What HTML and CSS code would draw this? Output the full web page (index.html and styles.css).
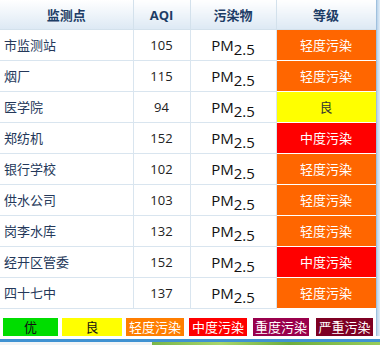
FILE: index.html
```html
<!DOCTYPE html>
<html lang="zh">
<head>
<meta charset="utf-8">
<link rel="stylesheet" href="styles.css">
</head>
<body>
<div class="page">
  <div class="main">
    <table class="aqi">
      <colgroup>
        <col class="c1"><col class="c2"><col class="c3"><col class="c4">
      </colgroup>
      <thead>
        <tr><th>监测点</th><th>AQI</th><th>污染物</th><th>等级</th></tr>
      </thead>
      <tbody>
        <tr><td class="name">市监测站</td><td class="num">105</td><td class="pol">PM<sub>2.5</sub></td><td class="lv l3">轻度污染</td></tr>
        <tr><td class="name">烟厂</td><td class="num">115</td><td class="pol">PM<sub>2.5</sub></td><td class="lv l3">轻度污染</td></tr>
        <tr><td class="name">医学院</td><td class="num">94</td><td class="pol">PM<sub>2.5</sub></td><td class="lv l2">良</td></tr>
        <tr><td class="name">郑纺机</td><td class="num">152</td><td class="pol">PM<sub>2.5</sub></td><td class="lv l4">中度污染</td></tr>
        <tr><td class="name">银行学校</td><td class="num">102</td><td class="pol">PM<sub>2.5</sub></td><td class="lv l3">轻度污染</td></tr>
        <tr><td class="name">供水公司</td><td class="num">103</td><td class="pol">PM<sub>2.5</sub></td><td class="lv l3">轻度污染</td></tr>
        <tr><td class="name">岗李水库</td><td class="num">132</td><td class="pol">PM<sub>2.5</sub></td><td class="lv l3">轻度污染</td></tr>
        <tr><td class="name">经开区管委</td><td class="num">152</td><td class="pol">PM<sub>2.5</sub></td><td class="lv l4">中度污染</td></tr>
        <tr><td class="name">四十七中</td><td class="num">137</td><td class="pol">PM<sub>2.5</sub></td><td class="lv l3">轻度污染</td></tr>
      </tbody>
    </table>
    <div class="legend">
      <span class="key k1">优</span>
      <span class="key k2">良</span>
      <span class="key k3">轻度污染</span>
      <span class="key k4">中度污染</span>
      <span class="key k5">重度污染</span>
      <span class="key k6">严重污染</span>
    </div>
  </div>
  <div class="side"></div>
</div>
<div class="bar"></div>
<div class="foot">
  <div class="foot-left"></div>
  <div class="foot-pic"></div>
</div>
</body>
</html>
```
FILE: styles.css
```css
html, body {
  margin: 0;
  padding: 0;
  background: #ffffff;
  font-family: "Noto Sans CJK SC", "Liberation Sans", sans-serif;
}
.page {
  display: flex;
  width: 380px;
}
.main {
  width: 376px;
}
.side {
  flex: 1;
  background: linear-gradient(to right, #b9d3ea, #e3eef8);
  border-left: 1px solid #9fc0de;
}
.aqi {
  width: 376px;
  border-collapse: collapse;
  table-layout: fixed;
}
.c1 { width: 133px; }
.c2 { width: 57px; }
.c3 { width: 86px; }
.c4 { width: 100px; }
.aqi th {
  height: 29px;
  padding: 0;
  font-family: "Open Sans", "Noto Sans CJK SC", sans-serif;
  font-size: 13px;
  font-weight: bold;
  color: #1d3d66;
  background: linear-gradient(to bottom, #ffffff, #dde9f4);
  border-right: 1px solid #d3e1ec;
  border-bottom: 1px solid #d3e1ec;
  text-align: center;
  line-height: 28px;
}
.aqi td {
  height: 30px;
  padding: 0;
  font-size: 13px;
  border: 1px solid #d9e5ef;
  border-top: none;
  border-left: none;
  line-height: 30px;
}
.aqi td.name {
  padding-left: 4px;
  color: #24385a;
}
.aqi td.num {
  text-align: center;
  color: #222;
  font-family: "Open Sans", "Liberation Sans", sans-serif;
}
.aqi td.pol {
  text-align: center;
  color: #111;
  font-family: "Open Sans", "Liberation Sans", sans-serif;
  font-size: 15px;
}
.pol sub {
  font-size: 15px;
  vertical-align: -4px;
  line-height: 0;
}
.aqi td.lv {
  text-align: center;
  color: #ffffff;
  border-bottom: 1px solid #ffffff;
  font-size: 13px;
}
.l2 { background: #ffff00; color: #333 !important; }
.l3 { background: #ff6600; }
.l4 { background: #ff0000; }
.legend {
  display: flex;
  gap: 4px;
  padding: 9px 0 0 3px;
  height: 18px;
}
.key {
  height: 18px;
  line-height: 18px;
  font-size: 13px;
  text-align: center;
  color: #ffffff;
}
.k1 { width: 55px; background: #00dd00; color: #111; }
.k2 { width: 60px; background: #ffff00; color: #111; }
.k3 { width: 58px; background: #ff7e00; }
.k4 { width: 58px; background: #ff0000; margin-left: 1px; }
.k5 { width: 56px; background: #99004c; margin-left: 2px; }
.k6 { width: 57px; background: #7e0023; margin-left: 3px; }
.bar {
  margin-top: 3px;
  height: 3px;
  width: 380px;
  background: #3f92d2;
}
.foot {
  display: flex;
  height: 10px;
  width: 380px;
}
.foot-left {
  width: 152px;
  background: #f1f4f6;
}
.foot-pic {
  flex: 1;
  background: linear-gradient(to right, #7ab64a, #a9d66a 30%, #6fae3d 60%, #98cc5a);
}
```
